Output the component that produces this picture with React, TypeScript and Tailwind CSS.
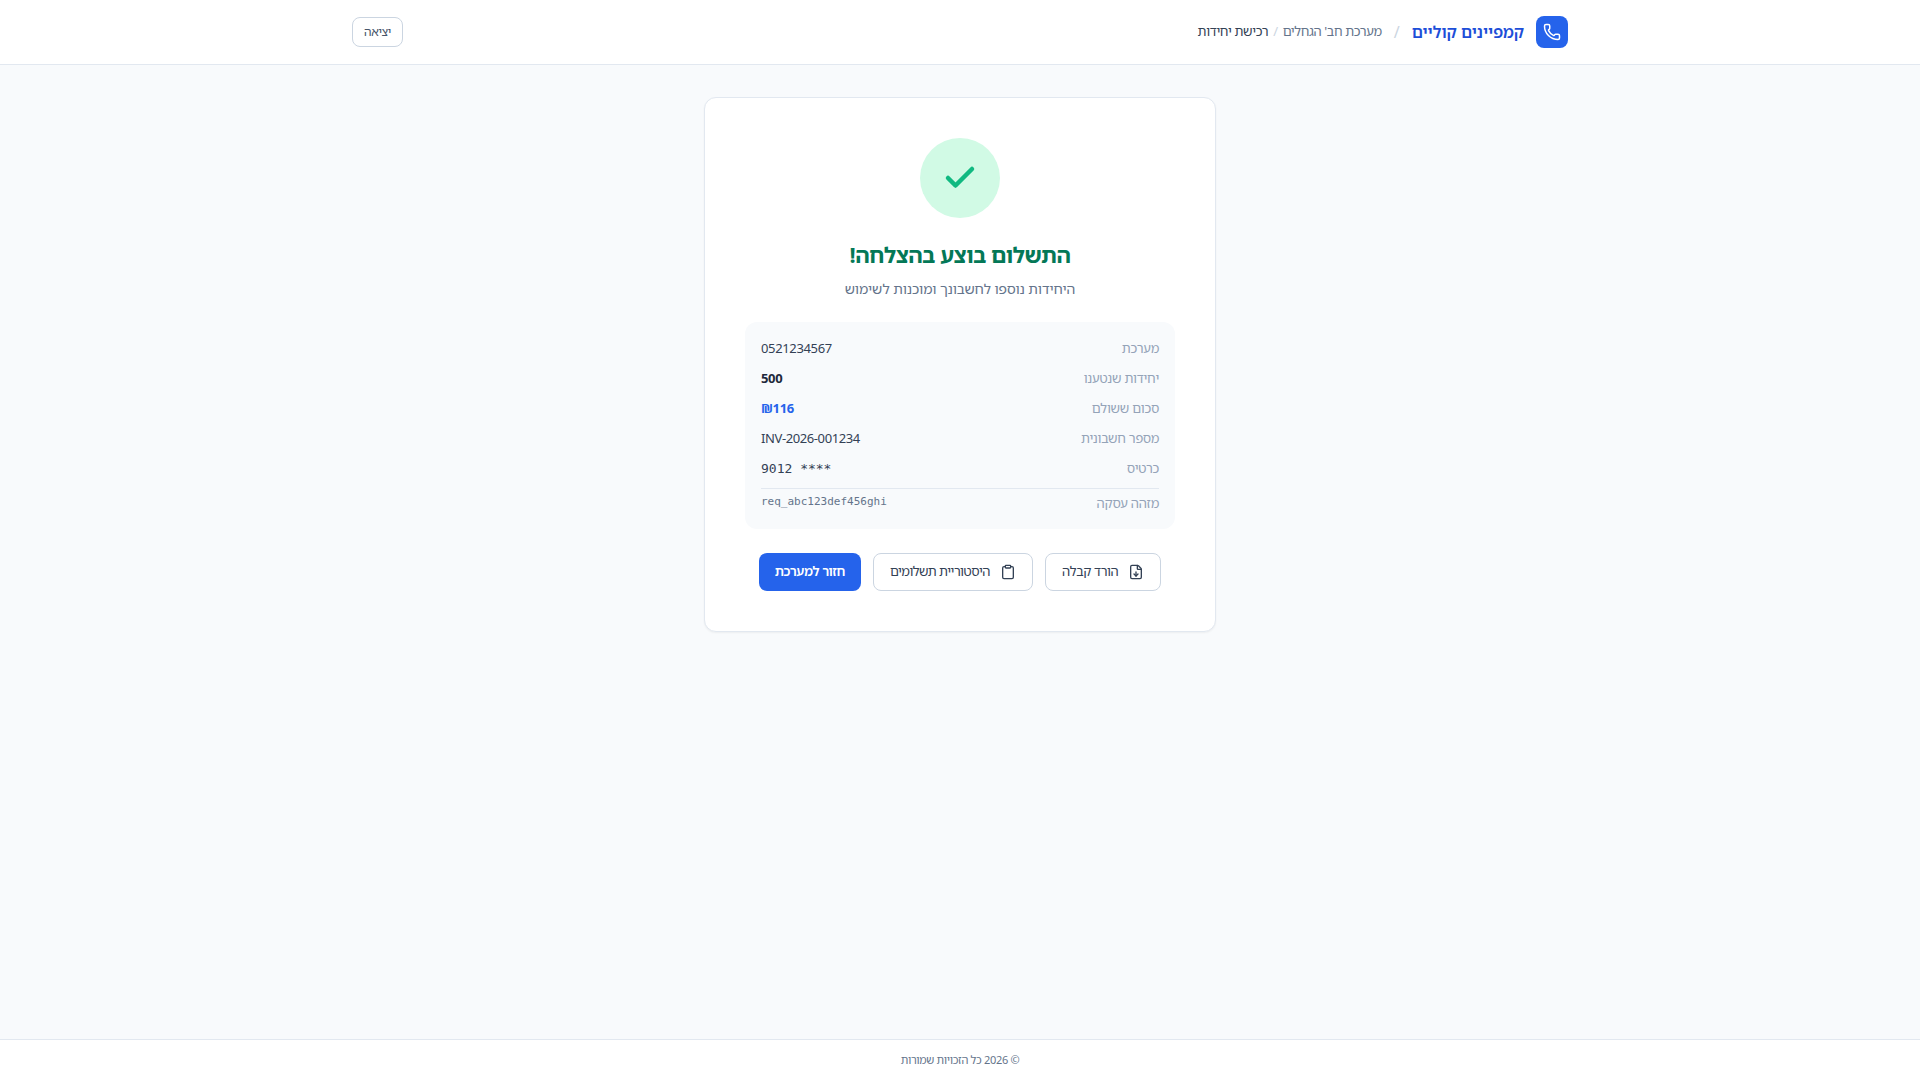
import type { ReactNode } from "react";
import { Phone, Check, FileDown, Clipboard } from "lucide-react";

function Row({ label, children }: { label: string; children: ReactNode }) {
  return (
    <div className="flex justify-between items-center h-[21px]">
      <span className="text-[13px] tracking-[-0.24px] text-[#94a3b8]">{label}</span>
      {children}
    </div>
  );
}

export default function App() {
  return (
    <div dir="rtl" className="min-h-screen flex flex-col bg-[#f8fafc] font-['Noto_Sans','Noto_Sans_Hebrew',sans-serif]">
      <header className="h-[65px] bg-white border-b border-[#e2e8f0]">
        <div className="max-w-7xl mx-auto px-8 h-16 flex items-center justify-between">
          <div className="flex items-center gap-3">
            <div className="w-8 h-8 rounded-lg bg-[#2563eb] flex items-center justify-center text-white">
              <Phone size={18} strokeWidth={2} />
            </div>
            <span className="text-base font-semibold text-[#1d4ed8]">קמפיינים קוליים</span>
            <span className="text-[#cbd5e1] text-base">/</span>
            <nav className="flex items-center gap-[5px] text-[13px] tracking-[-0.36px]">
              <span className="text-[#64748b]">מערכת חב' הגחלים</span>
              <span className="text-[#cbd5e1]">/</span>
              <span className="text-[#334155]">רכישת יחידות</span>
            </nav>
          </div>
          <button className="h-[30px] w-[51px] rounded-lg border border-[#cbd5e1] bg-white text-xs tracking-[-0.3px] text-[#475569]">יציאה</button>
        </div>
      </header>
      <main className="flex-1 py-8">
        <div className="w-[512px] mx-auto bg-white rounded-xl border border-[#e2e8f0] shadow-xs p-10 text-center">
          <div className="w-20 h-20 mx-auto rounded-full bg-[#d1fae5] flex items-center justify-center">
            <Check size={36} strokeWidth={3} className="text-[#10b981]" />
          </div>
          <h1 className="mt-5 text-[22px] leading-8 tracking-[-0.45px] font-bold text-[#047857]">התשלום בוצע בהצלחה!</h1>
          <p className="mt-2 text-sm leading-[22px] pb-0.5 tracking-[-0.1px] text-[#64748b]">היחידות נוספו לחשבונך ומוכנות לשימוש</p>
          <div className="mt-5 rounded-xl bg-[#f8fafc] p-4 flex flex-col gap-[9px] text-right">
            <Row label="מערכת"><span className="text-[13px] tracking-[-0.35px] text-[#334155]">0521234567</span></Row>
            <Row label="יחידות שנטענו"><span className="text-[13px] tracking-[-0.35px] font-bold text-[#1e293b]">500</span></Row>
            <Row label="סכום ששולם"><span className="text-[13px] tracking-[-0.35px] font-bold text-[#2563eb]">₪116</span></Row>
            <Row label="מספר חשבונית"><span className="text-[13px] tracking-[-0.4px] text-[#334155]">INV-2026-001234</span></Row>
            <Row label="כרטיס"><span className="text-[13px] text-[#334155] font-['DejaVu_Sans_Mono',monospace]">**** 9012</span></Row>
            <div className="border-t border-[#e2e8f0] pt-1 flex justify-between items-start h-[25px]">
              <span className="text-[13px] tracking-[-0.24px] leading-[21px] text-[#94a3b8]">מזהה עסקה</span>
              <span className="text-[11px] leading-[18px] text-[#64748b] font-['DejaVu_Sans_Mono',monospace]">req_abc123def456ghi</span>
            </div>
          </div>
          <div className="mt-6 flex justify-center gap-3">
            <button className="h-[38px] px-4 rounded-lg border border-[#cbd5e1] bg-white text-[13px] tracking-[-0.36px] text-[#334155] flex items-center gap-2.5 whitespace-nowrap">
              <FileDown size={16} />הורד קבלה
            </button>
            <button className="h-[38px] px-4 rounded-lg border border-[#cbd5e1] bg-white text-[13px] tracking-[-0.5px] text-[#334155] flex items-center gap-2.5 whitespace-nowrap">
              <Clipboard size={16} />היסטוריית תשלומים
            </button>
            <button className="h-[38px] px-4 rounded-lg bg-[#2563eb] text-[13px] tracking-[-0.4px] font-semibold text-white whitespace-nowrap">חזור למערכת</button>
          </div>
        </div>
      </main>
      <footer className="h-[41px] bg-white border-t border-[#e2e8f0] flex items-center justify-center text-[11px] tracking-[-0.3px] text-[#64748b]">
        © 2026 כל הזכויות שמורות
      </footer>
    </div>
  );
}
